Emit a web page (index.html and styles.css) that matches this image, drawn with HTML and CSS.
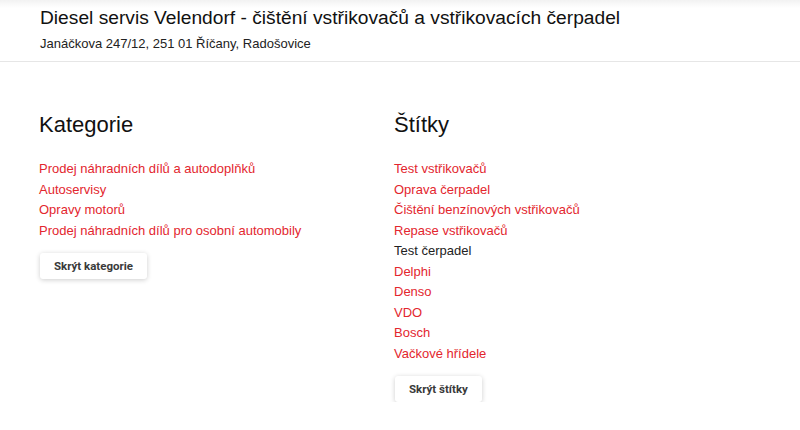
FILE: index.html
```html
<!DOCTYPE html>
<html lang="cs">
<head>
<meta charset="utf-8">
<title>Diesel servis Velendorf</title>
<link rel="stylesheet" href="styles.css">
</head>
<body>
<header class="header">
  <h1 class="title">Diesel servis Velendorf - čištění vstřikovačů a vstřikovacích čerpadel</h1>
  <p class="address">Janáčkova 247/12, 251 01 Říčany, Radošovice</p>
</header>
<main class="content">
  <section class="col">
    <h2 class="heading">Kategorie</h2>
    <ul class="list">
      <li><a href="#">Prodej náhradních dílů a autodoplňků</a></li>
      <li><a href="#">Autoservisy</a></li>
      <li><a href="#">Opravy motorů</a></li>
      <li><a href="#">Prodej náhradních dílů pro osobní automobily</a></li>
    </ul>
    <button class="btn">Skrýt kategorie</button>
  </section>
  <section class="col">
    <h2 class="heading">Štítky</h2>
    <ul class="list">
      <li><a href="#">Test vstřikovačů</a></li>
      <li><a href="#">Oprava čerpadel</a></li>
      <li><a href="#">Čištění benzínových vstřikovačů</a></li>
      <li><a href="#">Repase vstřikovačů</a></li>
      <li><span class="plain">Test čerpadel</span></li>
      <li><a href="#">Delphi</a></li>
      <li><a href="#">Denso</a></li>
      <li><a href="#">VDO</a></li>
      <li><a href="#">Bosch</a></li>
      <li><a href="#">Vačkové hřídele</a></li>
    </ul>
    <button class="btn">Skrýt štítky</button>
  </section>
</main>
</body>
</html>
```
FILE: styles.css
```css
html, body {
  margin: 0;
  padding: 0;
  background: #fff;
  font-family: "Liberation Sans", Arial, sans-serif;
  color: #222;
}
.header {
  height: 62px;
  box-sizing: border-box;
  border-bottom: 1px solid #e6e6e6;
  padding: 6px 40px 0;
  background: linear-gradient(to bottom, #f2f2f2 0, #fff 8px);
}
.title {
  margin: 0;
  font-size: 19.2px;
  font-weight: normal;
  line-height: 24px;
  color: #111;
}
.address {
  margin: 6px 0 0;
  font-size: 13px;
  line-height: 16px;
  color: #222;
}
.content {
  display: grid;
  grid-template-columns: 355px 1fr;
  padding: 49px 40px 0 39px;
}
.heading {
  margin: 0;
  font-size: 22px;
  font-weight: normal;
  line-height: 28px;
  color: #111;
}
.list {
  list-style: none;
  margin: 20px 0 0;
  padding: 0;
  font-size: 13px;
  line-height: 20.5px;
}
.list a {
  color: #e3262e;
  text-decoration: none;
}
.plain {
  color: #222;
}
.btn {
  margin: 12px 0 0 1px;
  height: 26px;
  padding: 0 14px;
  border: none;
  border-radius: 3px;
  background: #fff;
  box-shadow: 0 1px 5px rgba(0,0,0,0.2);
  font-family: Roboto, "Liberation Sans", sans-serif;
  font-weight: bold;
  font-size: 11.5px;
  color: #3a3a3a;
}
```
